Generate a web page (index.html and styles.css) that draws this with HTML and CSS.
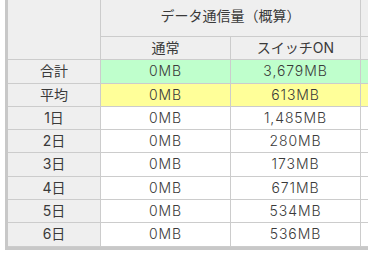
FILE: index.html
```html
<!DOCTYPE html>
<html lang="ja">
<head>
<meta charset="utf-8">
<link rel="stylesheet" href="styles.css">
</head>
<body>
<div class="frame">
  <table class="usage">
    <colgroup>
      <col class="c-label">
      <col class="c-val">
      <col class="c-val">
      <col class="c-val">
    </colgroup>
    <thead>
      <tr class="h1">
        <th rowspan="2"></th>
        <th colspan="2">データ通信量（概算）</th>
        <th></th>
      </tr>
      <tr class="h2">
        <th>通常</th>
        <th>スイッチON</th>
        <th></th>
      </tr>
    </thead>
    <tbody>
      <tr class="total"><th>合計</th><td>0MB</td><td>3,679MB</td><td></td></tr>
      <tr class="avg"><th>平均</th><td>0MB</td><td>613MB</td><td></td></tr>
      <tr><th>1日</th><td>0MB</td><td>1,485MB</td><td></td></tr>
      <tr><th>2日</th><td>0MB</td><td>280MB</td><td></td></tr>
      <tr><th>3日</th><td>0MB</td><td>173MB</td><td></td></tr>
      <tr><th>4日</th><td>0MB</td><td>671MB</td><td></td></tr>
      <tr><th>5日</th><td>0MB</td><td>534MB</td><td></td></tr>
      <tr><th>6日</th><td>0MB</td><td>536MB</td><td></td></tr>
    </tbody>
  </table>
</div>
</body>
</html>
```
FILE: styles.css
```css
html, body {
  margin: 0;
  padding: 0;
  background: #ffffff;
  overflow: hidden;
}
.frame {
  margin-left: 5px;
  width: 486px;
  border-left: 3px solid #c8c8c8;
  border-bottom: 3px solid #c8c8c8;
}
.usage {
  table-layout: fixed;
  width: 483px;
  border-collapse: separate;
  border-spacing: 0;
  font-family: "Inter", "Noto Sans CJK JP", "Noto Sans", sans-serif;
  font-size: 14px;
  line-height: 20.3px;
  color: #3a3a3a;
}
.c-label { width: 93px; }
.c-val { width: 130px; }
.usage th,
.usage td {
  padding: 1px 0;
  text-align: center;
  font-weight: normal;
  border-right: 1px solid #cccccc;
  border-bottom: 1px solid #cccccc;
  white-space: nowrap;
}
.usage th {
  background: #efefef;
}
.usage td {
  background: #ffffff;
  font-weight: 300;
  letter-spacing: 0.9px;
}
.usage .h1 th {
  height: 33px;
  padding: 0 0 3px 0;
}
.usage .total td { background: #bfffcc; }
.usage .avg td { background: #ffff99; }
```
